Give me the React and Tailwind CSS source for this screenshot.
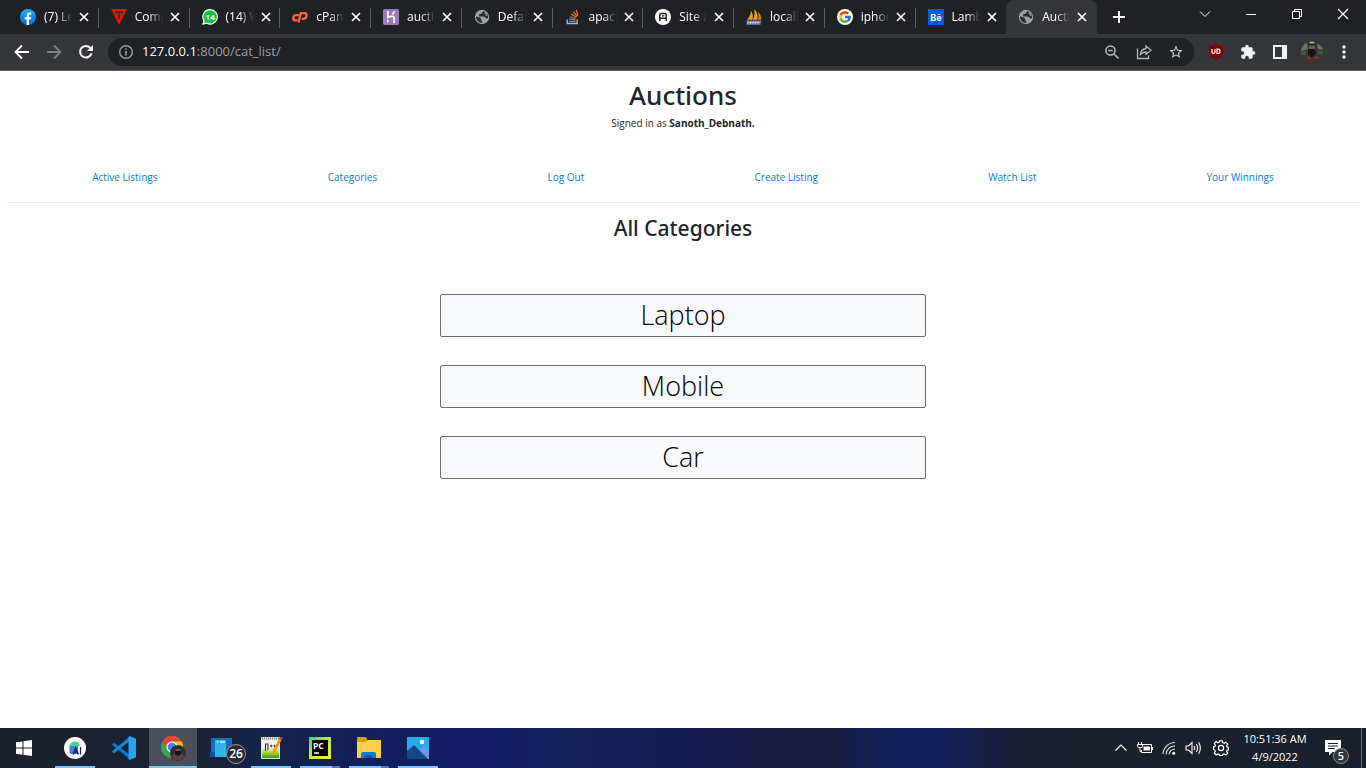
import React from "react";
import { FcGoogle } from "react-icons/fc";
import { MdExtension, MdStarBorder } from "react-icons/md";

/* ---------- Favicons ---------- */

function Facebook() {
  return (
    <svg viewBox="0 0 16 16" className="size-4">
      <defs>
        <linearGradient id="fb" x1="0" y1="0" x2="0" y2="1">
          <stop offset="0" stopColor="#1eaefc" />
          <stop offset="1" stopColor="#0668e2" />
        </linearGradient>
      </defs>
      <circle cx="8" cy="8" r="8" fill="url(#fb)" />
      <path d="M6.700 16V10.400H4.800V8h1.900V6.600c0-2 1-3.200 2.900-3.200.6 0 1.200.1 1.600.2v2h-1c-1 0-1.200.5-1.200 1.200V8h2.100l-.4 2.400H9V16z" fill="#fff" />
    </svg>
  );
}

function RedTriangle() {
  return (
    <svg viewBox="0 0 16 16" className="size-4">
      <path d="M0 0h16L8 16z" fill="#fb0707" />
      <path d="M4.500 3.200h7M8 3v7" stroke="#26272b" strokeWidth="1.500" />
      <path d="M4.800 2.500v2.500M11.200 2.500v2.500" stroke="#26272b" strokeWidth=".8" />
    </svg>
  );
}

function WhatsApp() {
  return (
    <svg viewBox="0 0 16 16" className="size-4">
      <path d="M8.200 0a7.800 7.800 0 1 1-3.700 14.700L.2 16l1.200-4.200A7.800 7.800 0 0 1 8.200 0z" fill="#fff" />
      <path d="M8.200 1.200a6.600 6.600 0 1 1-3.500 12.200l-2.700.8.8-2.500A6.600 6.600 0 0 1 8.200 1.200z" fill="#0fc244" />
      <text x="8.200" y="10.900" fontSize="8" fontWeight="700" textAnchor="middle" fill="#fff" fontFamily="Roboto, sans-serif">14</text>
    </svg>
  );
}

function Globe() {
  return (
    <svg viewBox="0 0 16 16" className="size-4">
      <circle cx="8" cy="8" r="7.200" fill="#9aa0a6" />
      <path d="M10 2.300c-1.800.2-1.500 1.500-2.300 2.200C7 5 5.400 4.800 5 5.900c-.3.900.5 1.700 1.500 1.700h3.200c1.100 0 1 1.200 2.100 1.500.8.2 1.300.5 1.300 1.100A6 6 0 0 0 14 8a6 6 0 0 0-4-5.700z" fill="#2b2c30" />
      <path d="M10 2.300c1.500.5-.2 2.200 1.200 2.700 1 .3 1 1.200.6 1.900h1.600A6 6 0 0 0 10 2.300z" fill="#9aa0a6" />
      <path d="M2 7.500c2 0 4.200 1.200 4.800 2 .5.700 0 1.500.7 2 .8.500 1 1.300.5 2.500A6 6 0 0 1 2 7.500z" fill="#2b2c30" />
    </svg>
  );
}

function RoundedA() {
  return (
    <svg viewBox="0 0 16 16" className="size-4">
      <circle cx="8" cy="8" r="8" fill="#fff" />
      <path d="M4.800 12V5.800q0-1.300 1.300-1.300h3.800q1.300 0 1.300 1.300V12M4.800 9.200h6.400M7 6.900h2.200" fill="none" stroke="#1d1e21" strokeWidth="1.400" />
    </svg>
  );
}

function PhpMyAdmin() {
  return (
    <svg viewBox="0 0 16 16" className="size-4">
      <path d="M1 10.800C3.500 8 5 5 4.800 1.500 7 4.500 7.300 8 6.500 10.800z" fill="#f89c0e" />
      <path d="M6.900 10.800C8.800 7 9 3.500 8.200.3c3.200 2.700 3.700 7 3.100 10.500z" fill="#f7a21b" />
      <path d="M11.700 10.800c1-2.300 1-5 .4-8C14.500 5 15.500 8 15.200 10.800z" fill="#d97c0c" />
      <path d="M.5 11.500h15L14.500 15.800H.7z" fill="#6c78af" />
      <path d="M2 12v3.500M4.500 12v3.500M7 12v3.500M9.500 12v3.500M12 12v3.500M1.500 13.500h12" stroke="#c5c9d8" strokeWidth=".8" />
    </svg>
  );
}

function Cpanel() {
  return (
    <svg viewBox="0 0 16 16" className="size-4" fill="none" stroke="#ff6c2c" strokeWidth="2.300">
      <path d="M6.800 6.200H4.200Q1.800 6.200 1.300 8.600T3.300 11.400H5.300" />
      <path d="M6.500 13.500L8.800 4.200H12.400Q15 4.200 14.500 7T11.600 9.800H9.800" />
    </svg>
  );
}

function Heroku() {
  return (
    <svg viewBox="0 0 16 16" className="size-4">
      <rect width="16" height="16" rx="1.800" fill="#9a7bc0" />
      <path d="M4.900 2v6.300c1.500-.8 3-1 4.300-1 1.500 0 1.900.9 1.900 2V14M11 2.200c-.1 1.300-.7 2.300-1.500 3.100" fill="none" stroke="#fff" strokeWidth="1.700" />
      <path d="M4 10l2.400 2L4 14z" fill="#fff" />
    </svg>
  );
}

function StackOverflow() {
  return (
    <svg viewBox="0 0 16 16" className="size-4">
      <path d="M2.200 10.500v4h9.900v-4" fill="none" stroke="#bcbbbb" strokeWidth="1.300" />
      <path d="M4 12.500h6.400M4.100 10.200l6.300.7M4.700 7.700l6 1.800M6.100 5l5.300 3.200M8.300 2.700l3.800 4.600M11.200 1l1.700 5.500" stroke="#f07a1c" strokeWidth="1.200" />
    </svg>
  );
}

function Behance() {
  return (
    <svg viewBox="0 0 16 16" className="size-4">
      <path d="M0 0h16v16H0z" fill="#0057ff" />
      <text x="8" y="11.500" fontSize="9" fontWeight="700" textAnchor="middle" fill="#fff" fontFamily="Inter, sans-serif">Bē</text>
    </svg>
  );
}

function Google() {
  return (
    <span className="flex size-4 items-center justify-center rounded-full bg-white">
      <FcGoogle className="size-3.5" />
    </span>
  );
}

/* ---------- Browser chrome ---------- */

const TABS = [
  { title: "(7) Le", Icon: Facebook },
  { title: "Comp", Icon: RedTriangle },
  { title: "(14) W", Icon: WhatsApp },
  { title: "cPane", Icon: Cpanel },
  { title: "auctio", Icon: Heroku },
  { title: "Defau", Icon: Globe },
  { title: "apach", Icon: StackOverflow },
  { title: "Site a", Icon: RoundedA },
  { title: "locall", Icon: PhpMyAdmin },
  { title: "iphon", Icon: Google },
  { title: "Lamb", Icon: Behance },
  { title: "Auctio", Icon: Globe },
];

function Cross() {
  return (
    <svg viewBox="0 0 8 8" className="size-2 overflow-visible">
      <path d="M0 0l8 8M8 0L0 8" stroke="#fff" strokeWidth="1.700" />
    </svg>
  );
}

function Tab({ title, Icon, active, divider }) {
  return (
    <div className={"relative flex h-full min-w-0 flex-1 items-center pl-3 " + (active ? "rounded-t-lg bg-[#35363a]" : "")}>
      <span className="flex shrink-0">
        <Icon />
      </span>
      <span className="ml-2 w-7 overflow-hidden text-xs whitespace-nowrap text-white [mask-image:linear-gradient(to_right,black_50%,transparent)]">
        {title}
      </span>
      <button aria-label={"Close " + title} className="ml-2 flex">
        <Cross />
      </button>
      {divider && <span className="absolute top-2 right-0 h-5 w-px bg-[#5c5e62]" />}
    </div>
  );
}

function WindowButton({ label, children }) {
  return (
    <button aria-label={label} className="flex h-7 w-[46px] items-center justify-center">
      <svg viewBox="0 0 10 10" className="size-2.5 overflow-visible" fill="none" stroke="#fff" strokeWidth="1">
        {children}
      </svg>
    </button>
  );
}

function TabStrip() {
  return (
    <div className="flex h-[34px] bg-[#202124] pl-2">
      <div className="flex min-w-0 flex-1">
        {TABS.map((t, i) => (
          <Tab key={i} {...t} active={i === 11} divider={i < 10} />
        ))}
      </div>
      <button aria-label="New tab" className="flex h-full w-11 items-center justify-center">
        <svg viewBox="0 0 12 12" className="size-3">
          <path d="M6 0v12M0 6h12" stroke="#fff" strokeWidth="2" />
        </svg>
      </button>
      <div className="flex pl-[41px]">
        <WindowButton label="Search tabs"><path d="M0 2.500l5 5 5-5" /></WindowButton>
        <WindowButton label="Minimize"><path d="M0 5.500h10" /></WindowButton>
        <WindowButton label="Restore"><path d="M.5 2.500h7v7h-7zM2.500 2.500v-2h7v7h-2" /></WindowButton>
        <WindowButton label="Close window"><path d="M0 0l10 10M10 0L0 10" strokeWidth="1.200" /></WindowButton>
      </div>
    </div>
  );
}

function IconButton({ label, children }) {
  return (
    <button aria-label={label} className="flex size-8 shrink-0 items-center justify-center">
      {children}
    </button>
  );
}

function Avatar({ className }) {
  return (
    <svg viewBox="0 0 22 22" className={className}>
      <defs>
        <clipPath id="face"><circle cx="11" cy="11" r="11" /></clipPath>
      </defs>
      <g clipPath="url(#face)">
        <path d="M0 0h22v22H0z" fill="#2f3f35" />
        <path d="M0 4l6-2 1 6-7 2zM16 3l6 2v4l-5-1z" fill="#66786a" />
        <path d="M0 10h5v4H0zM17 10h5v3h-5z" fill="#3c5a3c" />
        <path d="M2 22c0-6 3-9 9-9s9 3 9 9z" fill="#4a2f36" />
        <path d="M7 8h7l1 5-4 3-4-2z" fill="#131418" />
        <path d="M8 4h6v4H8z" fill="#75584f" />
        <path d="M7 4.500C7 0 14.500 0 14.500 4.500z" fill="#20242c" />
        <path d="M8 1.500q3-2 6 0l-1 1H9z" fill="#a4adb8" />
        <path d="M6 16l3 2M14 17l3-1" stroke="#7a5a5c" />
      </g>
    </svg>
  );
}

function Toolbar() {
  return (
    <div className="flex h-9 items-center bg-[#35363a] px-1.5">
      <IconButton label="Back">
        <svg viewBox="0 0 16 16" className="size-4" fill="none" stroke="#fff" strokeWidth="1.800"><path d="M15 8H2M8 1.500L1.500 8 8 14.500" /></svg>
      </IconButton>
      <IconButton label="Forward">
        <svg viewBox="0 0 16 16" className="size-4" fill="none" stroke="#7d7f83" strokeWidth="1.800"><path d="M1 8h13M8 1.500L14.500 8 8 14.500" /></svg>
      </IconButton>
      <IconButton label="Reload">
        <svg viewBox="0 0 16 16" className="size-4"><path d="M13.500 9.200A5.800 5.800 0 1 1 12.300 4" fill="none" stroke="#fff" strokeWidth="2" /><path d="M15 1v6H9z" fill="#fff" /></svg>
      </IconButton>
      <div className="ml-1.5 flex h-7 min-w-0 flex-1 items-center rounded-full bg-[#202124] pr-0.5 pl-2.5">
        <svg viewBox="0 0 16 16" className="size-4 shrink-0" fill="none" stroke="#9aa0a6" strokeWidth="1.400"><circle cx="8" cy="8" r="6.300" /><path d="M8 7v4.500M8 4.300v1.500" strokeWidth="1.600" /></svg>
        <span className="ml-2 flex-1 text-[13px] text-[#9aa0a6]">
          <span className="text-white">127.0.0.1</span>:8000/cat_list/
        </span>
        <IconButton label="Zoom">
          <svg viewBox="0 0 16 16" className="size-4" fill="none" stroke="#b4b7bb" strokeWidth="1.500"><circle cx="6.500" cy="6.500" r="4.600" /><path d="M10 10l4.500 4.500M4.300 6.500h4.400" /></svg>
        </IconButton>
        <IconButton label="Share">
          <svg viewBox="0 0 16 16" className="size-4" fill="none" stroke="#b4b7bb" strokeWidth="1.300"><path d="M1.500 4.500v10h11v-3" /><path d="M10 2l5 4.200-5 4.200V8C7.500 8 5.500 9 4.200 11.200 4.500 7.500 6.500 5 10 4.500z" /></svg>
        </IconButton>
        <IconButton label="Bookmark"><MdStarBorder className="size-4 text-[#c8cacd]" /></IconButton>
      </div>
      <div className="flex pl-1.5">
        <IconButton label="uBlock Origin">
          <svg viewBox="0 0 16 16" className="size-4">
            <path d="M8 0c2 1.300 4.500 1.700 7 1.700V7c0 4.500-2.500 7-7 9-4.500-2-7-4.500-7-9V1.700C3.500 1.700 6 1.300 8 0z" fill="#800000" />
            <path d="M4 5v3q0 1.500 1.500 1.500T7 8V5M9 5h1q2 0 2 2.200T10 9.500H9z" fill="none" stroke="#fff" strokeWidth="1.200" />
          </svg>
        </IconButton>
        <IconButton label="Extensions"><MdExtension className="size-4 text-[#f1f3f4]" /></IconButton>
        <IconButton label="Side panel">
          <svg viewBox="0 0 14 14" className="size-3.5"><path d="M0 0h14v14H0z" fill="#f1f3f4" /><path d="M2 2h7v10H2z" fill="#35363a" /></svg>
        </IconButton>
        <IconButton label="Profile"><Avatar className="size-[22px]" /></IconButton>
        <IconButton label="Menu">
          <svg viewBox="0 0 4 14" className="h-3.5 w-1" fill="#f1f3f4"><circle cx="2" cy="2" r="1.700" /><circle cx="2" cy="7" r="1.700" /><circle cx="2" cy="12" r="1.700" /></svg>
        </IconButton>
      </div>
    </div>
  );
}

/* ---------- Page ---------- */

const LINKS = ["Active Listings", "Categories", "Log Out", "Create Listing", "Watch List", "Your Winnings"];
const CATEGORIES = ["Laptop", "Mobile", "Car"];

function Page() {
  return (
    <main className="flex-1 border-t border-[#5f5b63] bg-white px-[7px] text-center text-[#212529]">
      <h1 className="pt-2 font-['Noto_Sans','Open_Sans',sans-serif] text-[26px] leading-8 font-medium">Auctions</h1>
      <p className="pt-1 text-[10px] leading-4">
        Signed in as <strong>Sanoth_Debnath.</strong>
      </p>
      <nav className="mt-7 flex h-9 items-center justify-around text-[10px] text-[#007bff]">
        {LINKS.map((l) => (
          <a key={l} href="#">{l}</a>
        ))}
      </nav>
      <hr className="mt-[7px] border-[#e5e5e5]" />
      <h2 className="pt-[11px] font-['Noto_Sans','Open_Sans',sans-serif] text-[21px] leading-7 font-medium">All Categories</h2>
      <div className="mt-[52px] flex flex-col items-center gap-7">
        {CATEGORIES.map((c) => (
          <button key={c} className="flex h-[43px] w-[36%] justify-center rounded-xs border border-[#6c6c6c] bg-[#f8f9fb] text-[27px] leading-10 font-light text-black">
            {c}
          </button>
        ))}
      </div>
    </main>
  );
}

/* ---------- Taskbar ---------- */

function TaskButton({ label, line, stacked, active, children }) {
  return (
    <button aria-label={label} className={"relative flex h-full w-12 items-center justify-center " + (active ? "bg-[#4a505b]" : "")}>
      {children}
      {line && (
        <span className={"absolute bottom-0 flex h-0.5 " + (active ? "inset-x-0" : "inset-x-1")}>
          <span className="flex-1 bg-[#76c7fb]" />
          {stacked && <span className="w-2 bg-[#4a82ab]" />}
        </span>
      )}
    </button>
  );
}

function Taskbar() {
  return (
    <footer className="flex h-10 bg-[linear-gradient(90deg,#1b202c_0%,#1a2233_14%,#14224d_20%,#12205a_27%,#101c68_35%,#12225a_41%,#141c52_51%,#1b1d3f_57%,#1b1d3c_60%,#0f2059_65%,#102059_69%,#1a1f38_74%,#1a202c_80%,#1b202c_100%)] text-white">
      <button aria-label="Start" className="mr-0.5 flex w-12 items-center justify-center">
        <svg viewBox="0 0 16 16" className="size-4" fill="#fff"><path d="M0 2.300L6.500 1.400V7.500H0zM7.500 1.200L16 0v7.500H7.500zM0 8.500h6.500v6.200L0 13.700zM7.500 8.500H16V16l-8.500-1.200z" /></svg>
      </button>
      <div className="flex gap-px pl-px">
        <TaskButton label="Android Studio" line>
          <svg viewBox="0 0 22 22" className="size-[22px]">
            <circle cx="11" cy="11" r="11" fill="#fff" />
            <path d="M5.500 8H14v9H8q-2.500 0-2.500-2.500z" fill="#3f7df0" />
            <path d="M6.500 7.500c0-3 7-4.500 9-.5V9h-9z" fill="#3ddc84" />
            <path d="M9 17.500l2.700-6.500 2.700 6.500M10 15h3.500M16.500 10v7.500" stroke="#0c2b4a" strokeWidth="1.300" fill="none" />
          </svg>
        </TaskButton>
        <TaskButton label="Visual Studio Code">
          <svg viewBox="0 0 24 24" className="size-6">
            <path d="M.3 8.200L2 6.800 18 19v4.500L.3 8.900z" fill="#0179cb" />
            <path d="M.3 15.800L2 17.200 18 5V.5L.3 15.100z" fill="#1187d0" />
            <path d="M17.500 0L24 2.800v18.400L17.500 24l-1-1V1z" fill="#24a4f2" />
          </svg>
        </TaskButton>
        <TaskButton label="Chrome" line active>
          <svg viewBox="0 0 26 26" className="size-[26px]">
            <circle cx="12" cy="12" r="11" fill="#34a853" />
            <path d="M12 1a11 11 0 0 1 9.600 5.500H12A5.500 5.500 0 0 0 7 14L2.500 6.400A11 11 0 0 1 12 1z" fill="#ea4335" />
            <path d="M12 6.500h9.600A11 11 0 0 1 12 23l4.800-8.300A5.500 5.500 0 0 0 12 6.500z" fill="#fbbc05" />
            <circle cx="12" cy="12" r="5.600" fill="#fff" />
            <circle cx="12" cy="12" r="4.400" fill="#4285f4" />
            <circle cx="18" cy="18" r="8" fill="#2c3430" />
            <path d="M12 22c0-6 12-6 12 0l-3 3.500h-6z" fill="#5b3e46" />
            <path d="M15 15h6v4l-3 2-3-2z" fill="#131418" />
            <path d="M15.500 14h5v2h-5z" fill="#75584f" />
            <path d="M15 14c0-3.500 6-3.500 6 0z" fill="#20242c" />
          </svg>
        </TaskButton>
        <TaskButton label="Your Phone">
          <svg viewBox="0 0 24 24" className="size-6">
            <path d="M1 2h21v14H1z" fill="#0f6fb7" />
            <path d="M0 16h20v5H0z" fill="#095391" />
            <path d="M5 4h11v17H5z" fill="#30b5ec" />
            <path d="M7 6h1M10 6h5" stroke="#c9f1ff" strokeWidth="1.500" />
          </svg>
          <span className="absolute right-0 bottom-1 flex size-5 items-center justify-center rounded-full border border-[#9599a0] bg-[#282b31] text-xs font-semibold">26</span>
        </TaskButton>
        <TaskButton label="Notepad++" line>
          <svg viewBox="0 0 24 24" className="size-6">
            <defs><linearGradient id="npp" x1="0" y1="0" x2="0" y2="1"><stop offset=".4" stopColor="#f4f6ee" /><stop offset=".75" stopColor="#94ce35" /><stop offset="1" stopColor="#3d9b12" /></linearGradient></defs>
            <path d="M2 1h19v22H2z" fill="#e3e5df" />
            <path d="M3 4h17v18H3z" fill="url(#npp)" />
            <path d="M3 2.500h17" stroke="#828880" strokeWidth="2" strokeDasharray="1 1" />
            <path d="M6.500 15V8h2.500v6M11 10h2.500M14.500 10h2.500M12.200 8.800v2.400M15.700 8.800v2.400" fill="none" stroke="#333b38" strokeWidth="1.100" />
            <path d="M21 1l2.500 1-7 14-3 2 .5-4z" fill="#f79722" />
            <path d="M21 1l2.500 1-1 2-2.500-1z" fill="#b93c23" />
          </svg>
        </TaskButton>
        <TaskButton label="PyCharm" line stacked>
          <svg viewBox="0 0 22 22" className="size-[22px]">
            <defs><linearGradient id="pc" x1="0" y1="0" x2="1" y2="1"><stop stopColor="#20d78b" /><stop offset=".4" stopColor="#b9e83d" /><stop offset="1" stopColor="#f3ee35" /></linearGradient></defs>
            <path d="M0 0h22v22H0z" fill="url(#pc)" />
            <path d="M3 3h16v16H3z" fill="#000" />
            <text x="4" y="11.500" fontSize="8.500" fontWeight="700" fill="#fff" fontFamily="Open Sans, sans-serif">PC</text>
            <path d="M5 16h5" stroke="#fff" strokeWidth="1.500" />
          </svg>
        </TaskButton>
        <TaskButton label="File Explorer" line stacked>
          <svg viewBox="0 0 24 22" className="h-[22px] w-6">
            <path d="M0 1q0-1 1-1h7q1 0 1.500 1L10 3H24v5H0z" fill="#e3a008" />
            <path d="M0 5h8.500l2-2H23q1 0 1 1v17H0z" fill="#ffcf48" />
            <path d="M4 21v-4q0-2 2-2h11q2 0 2 2v4z" fill="#0c7bd5" />
            <path d="M8 18.500h7V21H8z" fill="#07569b" />
          </svg>
        </TaskButton>
        <TaskButton label="Photos" line>
          <svg viewBox="0 0 22 22" className="size-[22px]">
            <path d="M0 0h22v22H0z" fill="#28aae8" />
            <path d="M10 15l7-5 5 5v7H10z" fill="#7893e5" />
            <path d="M0 14l7-6 14 14H0z" fill="#144b87" />
            <circle cx="15" cy="5" r="2.200" fill="#fff" />
          </svg>
        </TaskButton>
      </div>

      <div className="ml-auto flex items-center">
        <button aria-label="Show hidden icons" className="flex w-6 justify-center">
          <svg viewBox="0 0 12 12" className="size-3" fill="none" stroke="#fff" strokeWidth="1.200"><path d="M.5 8.500L6 3l5.500 5.500" /></svg>
        </button>
        <button aria-label="Battery" className="flex w-6 justify-center">
          <svg viewBox="0 0 16 12" className="h-3 w-4" fill="none" stroke="#fff"><path d="M5 2.500h9.500v8H4.500V8M15.500 5v3M1.500 0v2.500M4.500 0v2.500M.5 2.500h5v2q0 1-1.500 1H2q-1.500 0-1.500-1zM3 5.500v4h1.500" /><path d="M6.500 4.500H13v4H6.500z" fill="#fff" stroke="none" /></svg>
        </button>
        <button aria-label="Wi-Fi" className="flex w-6 justify-center">
          <svg viewBox="0 0 14 14" className="size-3.5" fill="none" stroke="#d8dade" strokeWidth="1.200"><path d="M1 13A12 12 0 0 1 13 1.500M4 13.500A9 9 0 0 1 13 4.800M7 13.500a6 6 0 0 1 6-5.500" /><circle cx="11.700" cy="12.200" r="1.500" fill="#fff" stroke="none" /></svg>
        </button>
        <button aria-label="Volume" className="flex w-6 justify-center">
          <svg viewBox="0 0 17 14" className="h-3.5 w-[17px]" fill="none" stroke="#fff" strokeWidth="1.100"><path d="M1 5h2.500L7 1.500v11L3.500 9H1zM9 5q1.200 2 0 4M11.300 3q2.500 4 0 8M13.600 1.200q3.500 5.800 0 11.600" /></svg>
        </button>
        <button aria-label="Settings" className="flex w-8 justify-center">
          <svg viewBox="0 0 16 16" className="size-4" fill="none" stroke="#fff" strokeWidth="1.200"><path d="M6.600.8h2.800l.4 1.900 1.300.6 1.700-1.100 1.900 1.900-1.100 1.700.6 1.300 1.300.4v2.200l-1.300.4-.6 1.300 1.100 1.700-1.900 1.900-1.700-1.100-1.300.6-.4 1.100H6.600l-.4-1.100-1.300-.6-1.700 1.100-1.900-1.900 1.100-1.700-.6-1.300L.6 9.400V6.900l1.200-.4.6-1.300-1.100-1.700 1.900-1.900 1.700 1.100 1.300-.6z" /><circle cx="8" cy="8" r="2.600" /></svg>
        </button>
        <div className="w-[76px] text-center text-[11px] leading-[18px] whitespace-nowrap">
          <div>10:51:36 AM</div>
          <div>4/9/2022</div>
        </div>
        <button aria-label="Notifications" className="relative flex h-full w-12 items-center pl-3">
          <svg viewBox="0 0 16 16" className="size-4"><path d="M0 0h16v12H7.500L4 15.500V12H0z" fill="#fff" /><path d="M3 3.500h10M3 6h10M3 8.500h7" stroke="#1b202c" strokeWidth="1.200" /></svg>
          <span className="absolute right-3 bottom-1 flex size-4 items-center justify-center rounded-full border border-[#8a8d93] bg-[#33363c] text-[11px] font-semibold">5</span>
        </button>
        <span className="mr-1 h-full w-px bg-[#6a6e76]" />
      </div>
    </footer>
  );
}

export default function App() {
  return (
    <div className="flex min-h-screen flex-col bg-white font-['Open_Sans','Noto_Sans',sans-serif]">
      <TabStrip />
      <Toolbar />
      <Page />
      <Taskbar />
    </div>
  );
}
